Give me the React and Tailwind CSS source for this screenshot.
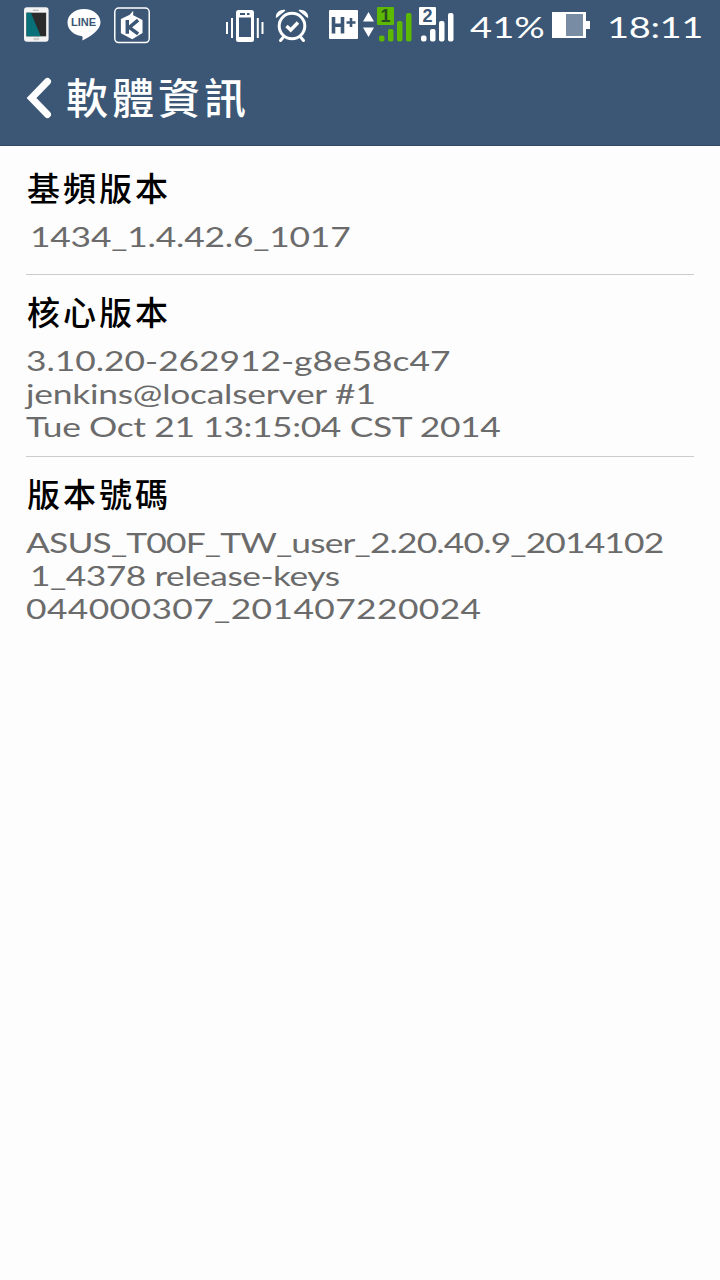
import { useLayoutEffect, useRef } from "react";

// Wide text line: glyphs are stretched, then tracked out to fill the given width.
function WideText({ children, width, stretch = 1.36, className = "" }) {
  const ref = useRef(null);
  useLayoutEffect(() => {
    const el = ref.current;
    el.style.letterSpacing = "0px";
    const gap = (width / stretch - el.offsetWidth) / children.length;
    el.style.letterSpacing = `${gap}px`;
  }, [children, width, stretch]);
  return (
    <div style={{ width }} className={`whitespace-pre ${className}`}>
      <span ref={ref} className="inline-block origin-left" style={{ transform: `scaleX(${stretch})` }}>
        {children}
      </span>
    </div>
  );
}

function AppIcons() {
  return (
    <div className="flex w-[126px] items-start">
      <svg width="26" height="36" viewBox="0 0 26 36">
        <rect x="0" y="0" width="25" height="35" rx="3" fill="#f3f3f3" />
        <rect x="2.5" y="5.5" width="20" height="24" fill="#2b2b2b" />
        <path d="M2.5 5.5h4.500l10 24h-14.500z" fill="#087078" />
        <path d="M9 3h6" stroke="#aaa" />
        <rect x="9.5" y="31" width="6" height="2.5" rx="1" fill="#ccc" />
      </svg>
      <div className="relative ml-[17px] mt-[1px] h-[34px] w-[34px]">
        <svg width="34" height="34" viewBox="0 0 34 34">
          <path d="M17 1C7.500 1 .5 7 .5 14.500c0 7 6 12.500 14 13.500 1.500.3 1.200 2 .8 4.500C23 29 33.500 22 33.500 14.500 33.500 7 26.500 1 17 1z" fill="#fff" />
        </svg>
        <span className="absolute inset-x-0 top-[8px] text-center font-['Liberation_Sans'] text-[11px] font-bold leading-[13px] text-[#3b5775]">LINE</span>
      </div>
      <svg width="37" height="37" viewBox="0 0 37 37" className="ml-[13px]">
        <rect x=".8" y=".8" width="35" height="35" rx="4" fill="none" stroke="#fff" strokeWidth="1.500" />
        <path d="M7 12 16 7.500 19.500 3.500v4.500l9.500 5v13L18.500 32.500 7 26.500z" fill="#fff" />
        <path d="M13.500 13v14M24.500 13l-9 7.500 9 6.500" fill="none" stroke="#3b5775" strokeWidth="3.500" />
      </svg>
    </div>
  );
}

function Vibrate() {
  return (
    <svg width="38" height="34" viewBox="0 0 38 34" className="block">
      <path d="M1 13v12M6 9v20M31.800 9v20M36.500 13v12" stroke="#fff" strokeWidth="2" />
      <rect x="10" y="1" width="18" height="32" rx="2.500" fill="#fff" />
      <rect x="13" y="8.500" width="12" height="19.500" fill="#3b5775" />
      <path d="M14 5h5M21 5h2.500" stroke="#3b5775" strokeWidth="2" />
    </svg>
  );
}

function Alarm() {
  return (
    <svg width="34" height="34" viewBox="0 0 34 34" fill="none" stroke="#fff" strokeLinecap="round">
      <circle cx="17" cy="17" r="12.800" strokeWidth="3" />
      <path d="m11.500 17 4.200 4 7.300-7.500" strokeWidth="3.400" strokeLinecap="butt" />
      <path d="m8.500 28-3 3.500M25.500 28l3 3.500" strokeWidth="3" />
      <path d="M1.500 8C1.500 4 5 1 9.500 1.500L1.500 8zM32.500 8c0-4-3.500-7-8-6.500L32.500 8z" fill="#fff" strokeWidth="1.500" strokeLinejoin="round" />
    </svg>
  );
}

function Network() {
  return (
    <div className="flex h-[30px] items-center gap-[4px]">
      <svg width="30" height="30" viewBox="0 0 30 30">
        <rect width="29" height="29" rx="1" fill="#fff" />
        <path d="M4.500 7v16.500M13.500 7v16.500M4.500 15.300h9" fill="none" stroke="#3b5775" strokeWidth="3.600" />
        <path d="M17.500 12.500h9M22 8v9" fill="none" stroke="#3b5775" strokeWidth="2.600" />
      </svg>
      <svg width="11" height="26" viewBox="0 0 11 26" fill="#fff">
        <path d="M5.500 0 11 9.500H0zM0 15.500h11L5.500 25z" />
      </svg>
    </div>
  );
}

function Signal({ label, box, text, fill }) {
  return (
    <div className="relative h-[35px] w-[35px]">
      <svg width="35" height="35" viewBox="0 0 35 35" className={fill}>
        <rect x="2" y="28.500" width="5.500" height="6" rx="2" />
        <rect x="11" y="22" width="5.500" height="12.500" rx="2" />
        <rect x="20" y="14" width="5.500" height="20.500" rx="2" />
        <rect x="29" y="6" width="5.500" height="28.500" rx="2" />
      </svg>
      <span className={`absolute left-0 top-0 h-[18px] w-[17px] rounded-[1px] text-center font-['Liberation_Sans'] text-[18px] font-bold leading-[19px] ${box} ${text}`}>
        {label}
      </span>
    </div>
  );
}

function Battery() {
  return (
    <svg width="39" height="27" viewBox="0 0 39 27">
      <rect width="34" height="26" fill="#fff" />
      <rect x="34" y="9" width="4" height="8" fill="#fff" />
      <rect x="14" y="2" width="17" height="22" fill="#788da4" />
    </svg>
  );
}

function StatusBar() {
  return (
    <div className="flex h-[52px] items-start pl-[24px]">
      <div className="mt-[7px]"><AppIcons /></div>
      <div className="ml-[76px] mt-[9px]"><Vibrate /></div>
      <div className="ml-[11px] mt-[9px]"><Alarm /></div>
      <div className="ml-[20px] mt-[10px]"><Network /></div>
      <div className="ml-[3px] mt-[7px]"><Signal label="1" box="bg-[#5cb800]" text="text-[#294b25]" fill="fill-[#5cb800]" /></div>
      <div className="ml-[7px] mt-[7px]"><Signal label="2" box="bg-white" text="text-[#3b5775]" fill="fill-white" /></div>
      <WideText width={75} className="ml-[16px] mt-[10px] text-[28px] leading-[34px]">41%</WideText>
      <div className="ml-[7px] mt-[12px]"><Battery /></div>
      <WideText width={96} className="ml-[16px] mt-[10px] text-[28px] leading-[34px]">18:11</WideText>
    </div>
  );
}

function Section({ title, lines, className }) {
  return (
    <section className={className}>
      <h2 className="h-[44px] pl-px font-['Noto_Sans_CJK_TC',sans-serif] text-[33px] font-medium leading-[44px] tracking-[3px] text-black">
        {title}
      </h2>
      <div className="mt-[12px] text-[26px] leading-[33px] text-[#6b6b6b]">
        {lines.map(([text, width, indent = ""]) => (
          <WideText key={text} width={width} className={indent}>{text}</WideText>
        ))}
      </div>
    </section>
  );
}

export default function App() {
  return (
    <div className="h-[1280px] w-[720px] overflow-hidden bg-[#fdfdfd] font-['Lato',sans-serif]">
      <header className="h-[146px] border-b border-[#2f4a68] bg-[#3b5775] text-white">
        <StatusBar />
        <div className="flex h-[92px] items-center pl-[26px]">
          <svg width="26" height="42" viewBox="0 0 26 42" fill="none" stroke="#fff" strokeWidth="7" strokeLinecap="round" strokeLinejoin="miter">
            <path d="M21.500 4.500 5.500 21l16 16.500" />
          </svg>
          <h1 className="-mt-[5px] ml-[14px] font-['Noto_Sans_CJK_TC',sans-serif] text-[42px] font-medium leading-[60px] tracking-[4px]">軟體資訊</h1>
        </div>
      </header>
      <main className="px-[26px]">
        <Section className="h-[129px] border-b border-[#cccccc] pt-[19px]" title="基頻版本" lines={[["1434_1.4.42.6_1017", 320, "ml-[4px]"]]} />
        <Section
          className="h-[182px] border-b border-[#cccccc] pt-[14px]"
          title="核心版本"
          lines={[
            ["3.10.20-262912-g8e58c47", 425],
            ["jenkins@localserver #1", 350],
            ["Tue Oct 21 13:15:04 CST 2014", 475],
          ]}
        />
        <Section
          className="pt-[14px]"
          title="版本號碼"
          lines={[
            ["ASUS_T00F_TW_user_2.20.40.9_2014102", 638],
            ["1_4378 release-keys", 309, "ml-[4px]"],
            ["044000307_201407220024", 456],
          ]}
        />
      </main>
    </div>
  );
}
